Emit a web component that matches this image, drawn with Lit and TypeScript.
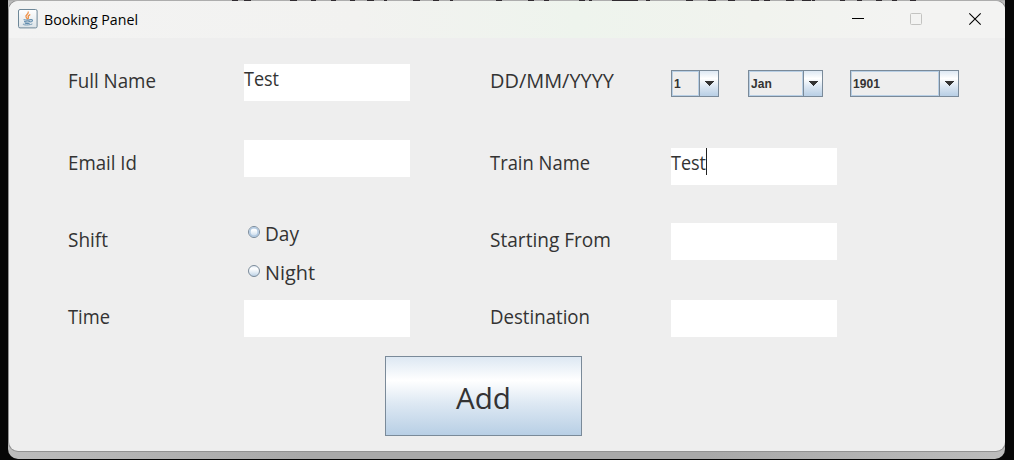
import { LitElement, html, css, svg } from "lit";
import { customElement, property } from "lit/decorators.js";

@customElement("fit-text")
class FitText extends LitElement {
  @property() text = "";
  @property({ type: Number }) width = 0;
  @property({ type: Number }) size = 20;
  @property() color = "#333";
  static styles = css`
    :host { display: block; }
    svg { display: block; overflow: visible; font-family: "Open Sans", "Noto Sans", sans-serif; }
  `;
  render() {
    const h = Math.round(this.size * 1.4);
    return html`<svg width=${this.width} height=${h}>
      <text x="0" y=${Math.round(this.size * 1.05)} font-size=${this.size} fill=${this.color}
        textLength=${this.width} lengthAdjust="spacingAndGlyphs">${this.text}</text>
    </svg>`;
  }
}

@customElement("combo-box")
class ComboBox extends LitElement {
  @property() value = "";
  static styles = css`
    :host { display: flex; box-sizing: border-box; height: 27px; border: 1px solid #7a8a99; }
    .value {
      flex: 1; box-sizing: border-box; border: 1px solid #b8cfe5; padding-left: 1px;
      font: bold 12px/24px "Liberation Sans", Arial, sans-serif; letter-spacing: 0.1px; color: #333;
    }
    .arrow {
      width: 18px; border-left: 1px solid #7a8a99; display: grid; place-items: center;
      background: linear-gradient(#dde8f3 0%, #fff 30%, #dde8f3 60%, #b8cfe5 100%);
    }
    svg { display: block; }
  `;
  render() {
    return html`<div class="value">${this.value}</div>
      <div class="arrow"><svg width="10" height="5" shape-rendering="crispEdges"><path d="M0 0H10L5 5Z" fill="#333" /></svg></div>`;
  }
}

const titleMarks = [
  [232, 6], [244, 7], [290, 7], [311, 5], [331, 5], [350, 5], [367, 7], [384, 3], [413, 7], [433, 6],
  [450, 3], [496, 6], [528, 6], [544, 5], [579, 6], [589, 3], [612, 26], [646, 4], [686, 7], [708, 8],
  [728, 7], [751, 8], [764, 6], [786, 8], [802, 9], [812, 3], [840, 5], [857, 5], [876, 6], [892, 5], [910, 6],
];

@customElement("app-root")
class AppRoot extends LitElement {
  static styles = css`
    :host {
      display: block; box-sizing: border-box; width: 1014px; height: 460px; padding: 0 9px 0 8px;
      background: #060606; overflow: hidden;
    }
    .backdrop {
      height: 459px; overflow: hidden; border-radius: 0 0 10px 10px;
      background: linear-gradient(90deg, #bcbcbc, #a8a8a8 30%, #a8a8a8 70%, #bcbcbc);
    }
    .marks { display: block; }
    .window {
      box-sizing: border-box; width: 996px; height: 450px; margin-left: 1px; overflow: hidden;
      border-radius: 9px; background: #eee; box-shadow: 0 0 0 1px #929292;
    }
    .titlebar {
      display: flex; align-items: center; height: 37px; padding-left: 9px;
      background: linear-gradient(90deg, #f3f3f3 0%, #f2f2f0 35%, #eef4ed 57%, #f1f3ee 75%, #f3f3f2 90%);
    }
    .tile { display: block; margin-bottom: 1px; }
    .titlebar fit-text { margin: 1px 0 0 6px; }
    .controls { display: block; margin-left: auto; }
    .form { display: flex; height: 312px; }
    .labels, .fields { display: flex; flex-direction: column; }
    .labels.first { width: 176px; padding-left: 59px; }
    .labels.second { width: 181px; }
    .fields.first { width: 246px; }
    .labels fit-text { height: 28px; }
    .labels fit-text:nth-child(1) { margin-top: 30px; }
    .labels fit-text:nth-child(2) { margin-top: 54px; }
    .labels fit-text:nth-child(3), .labels fit-text:nth-child(4) { margin-top: 49px; }
    .input { display: flex; width: 166px; height: 37px; background: #fff; flex: none; }
    .input fit-text { padding-top: 2px; }
    .caret { width: 1px; height: 27px; background: #222; }
    .fields.first .input:nth-child(1) { margin-top: 26px; }
    .fields.first .input:nth-child(2) { margin-top: 39px; }
    .radios { height: 123px; padding: 43px 0 0 4px; box-sizing: border-box; }
    .radio { display: flex; height: 39px; }
    .radio svg { display: block; margin-top: 6px; }
    .radio fit-text { margin: 1px 0 0 5px; }
    .dates { display: flex; margin-top: 32px; }
    .day { width: 48px; }
    .month { width: 75px; margin-left: 29px; }
    .year { width: 109px; margin-left: 27px; }
    .train { margin-top: 51px; }
    .start { margin-top: 38px; }
    .dest { margin-top: 40px; }
    .add {
      display: flex; justify-content: center; box-sizing: border-box; width: 197px; height: 80px;
      margin: 6px 0 0 376px; padding: 20px 0 0; border: 1px solid #7a8a99; border-radius: 0;
      background: linear-gradient(#dde8f3 0%, #fff 30%, #dde8f3 60%, #b8cfe5 100%);
    }
  `;

  label(text: string, width: number) {
    return html`<fit-text .text=${text} .width=${width} .size=${19.5}></fit-text>`;
  }

  radio(text: string, width: number, hover: boolean) {
    const id = "g" + text;
    return html`<div class="radio">
      <svg width="12" height="12" viewBox="0 0 12 12">
        <defs><linearGradient id=${id} x2="0" y2="1">
          <stop offset="0" stop-color="#dde8f3" /><stop offset=".3" stop-color="#fff" />
          <stop offset=".6" stop-color="#e4edf5" /><stop offset="1" stop-color="#b8cfe5" />
        </linearGradient></defs>
        <circle cx="6" cy="6" r="5.5" fill="url(#${id})" stroke="#7a8a99" />
        ${hover ? svg`<circle cx="6" cy="6" r="4.2" fill="none" stroke="#b0c8e0" stroke-width="1.6" />` : ""}
      </svg>${this.label(text, width)}</div>`;
  }

  render() {
    return html`<div class="backdrop">
      <svg class="marks" width="997" height="1" viewBox="8 0 997 1" shape-rendering="crispEdges">
        <rect x="8" width="997" height="1" fill="#adadad" />
        ${titleMarks.map(([x, w]) => svg`<rect x=${x} width=${w} height="1" fill="#302b30" />`)}
      </svg>
      <div class="window">
        <div class="titlebar">
          <svg class="tile" width="20" height="20" viewBox="0 0 20 20">
            <defs><linearGradient id="tile" x2="0" y2="1"><stop stop-color="#fff" /><stop offset="1" stop-color="#dce3e8" /></linearGradient></defs>
            <rect x=".5" y=".5" width="18.6" height="18.4" rx="1.5" fill="url(#tile)" stroke="#6e8798" />
            <g fill="none" stroke-linecap="round">
              <path d="M10.2 3C11 5 7.2 6 8 7.8C8.2 8.6 9 9 9.2 9.8M11.8 5.8C9.5 7 10 7.6 10.4 8.4C10.6 9 10.3 9.5 10 9.8" stroke="#ee9148" stroke-width="1.3" />
              <path d="M6 10.7C8 11.3 10.5 11.2 12.5 10.6M6.5 12.6C8.5 13.1 10.4 13.1 12 12.6M7.2 14.2C8.7 14.6 10 14.6 11.3 14.2M12.8 10.8C15 10.1 15 12.4 12.7 13" stroke="#5f8bad" stroke-width="1.1" />
              <path d="M5.2 14.9C3.2 16.2 11.5 16.5 14 15.1" stroke="#7398b3" stroke-width="1" />
            </g>
          </svg>
          <fit-text .text=${"Booking Panel"} .width=${94} .size=${14.5} color="#000"></fit-text>
          <svg class="controls" width="176" height="37" viewBox="0 0 176 37" fill="none">
            <path d="M23 17.5H35" stroke="#000" />
            <rect x="81.5" y="12.5" width="11" height="11" rx="1" stroke="#c3c3c1" />
            <path d="M140.3 12.3L151.7 23.7M151.7 12.3L140.3 23.7" stroke="#000" stroke-width="1.1" />
          </svg>
        </div>
        <div class="form">
          <div class="labels first">
            ${this.label("Full Name", 88)}${this.label("Email Id", 69)}${this.label("Shift", 40)}${this.label("Time", 42)}
          </div>
          <div class="fields first">
            <div class="input">${this.label("Test", 35)}</div>
            <div class="input"></div>
            <div class="radios">${this.radio("Day", 34, true)}${this.radio("Night", 50, false)}</div>
            <div class="input"></div>
          </div>
          <div class="labels second">
            ${this.label("DD/MM/YYYY", 124)}${this.label("Train Name", 100)}${this.label("Starting From", 121)}${this.label("Destination", 100)}
          </div>
          <div class="fields">
            <div class="dates">
              <combo-box class="day" value="1"></combo-box>
              <combo-box class="month" value="Jan"></combo-box>
              <combo-box class="year" value="1901"></combo-box>
            </div>
            <div class="input train">${this.label("Test", 35)}<div class="caret"></div></div>
            <div class="input start"></div>
            <div class="input dest"></div>
          </div>
        </div>
        <button class="add"><fit-text .text=${"Add"} .width=${55} .size=${30}></fit-text></button>
      </div>
    </div>`;
  }
}
